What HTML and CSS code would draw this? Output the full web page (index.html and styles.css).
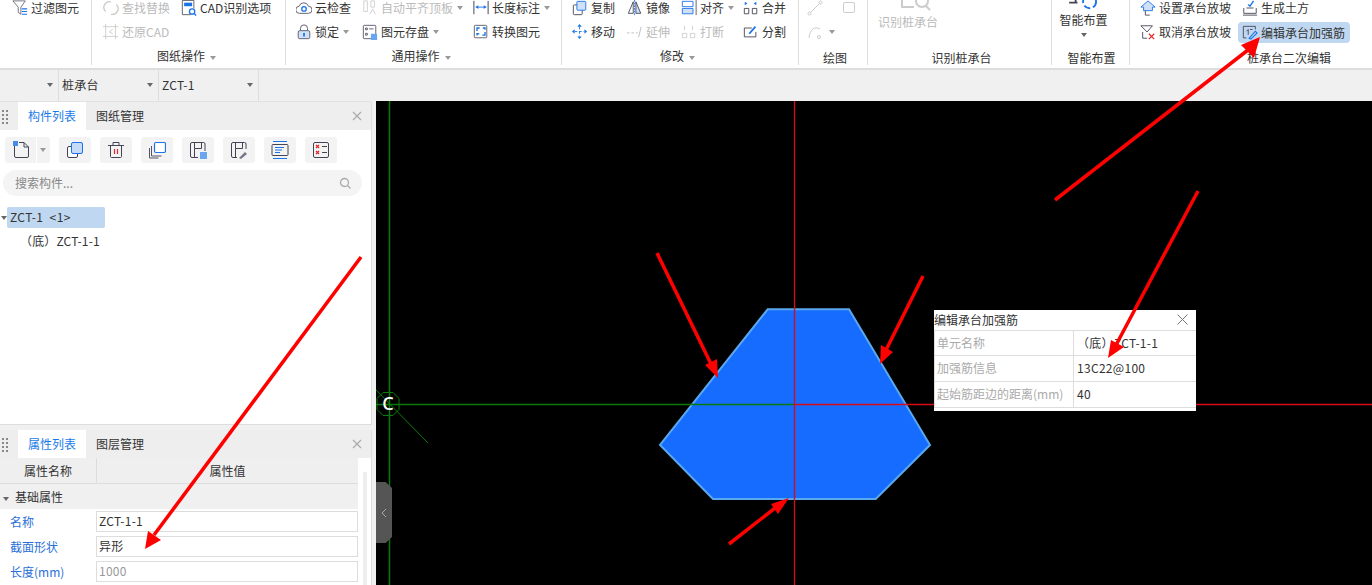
FILE: index.html
```html
<!DOCTYPE html>
<html lang="zh-CN">
<head>
    <meta charset="UTF-8">
    <title>桩承台二次编辑</title>
    <link rel="stylesheet" href="styles.css">
</head>
<body>

<div class="ribbon">
    <div class="group g-a">
        <div class="tools">
            <div class="tool"><svg class="ico" viewBox="0 0 18 18"><path d="M1 1h14l-5 7v8l-3-2V8z" fill="none" stroke="#667"/><path d="M11 10h6M11 13h6M11 16h6" stroke="#1a73e8" stroke-width="1.2"/></svg>过滤图元</div>
        </div>
    </div>
    <div class="group g-b">
        <div class="tools cols-b">
            <div class="tool off"><svg class="ico" viewBox="0 0 18 18"><path d="M3 13a6.500 6.500 0 0 1 6-11M15 5a6.500 6.500 0 0 1-6 11" fill="none" stroke="#ccc" stroke-width="1.500"/></svg>查找替换</div>
            <div class="tool"><svg class="ico" viewBox="0 0 18 18"><path d="M11 16.500H1.500V.5h13v9" fill="none" stroke="#556"/><path d="M3.500 3h9v4h-9z" fill="#1a73e8"/><circle cx="12.500" cy="13" r="3" fill="#fff" stroke="#1a73e8" stroke-width="1.500"/><path d="M15 15.500l2 2" stroke="#1a73e8" stroke-width="1.500"/></svg>CAD识别选项</div>
            <div class="tool off"><svg class="ico" viewBox="0 0 18 18"><path d="M3 0v17M0 3h17M14 0v17M0 14h17" fill="none" stroke="#ccc"/><path d="M11 6L7 9l4 2" fill="none" stroke="#ccc"/></svg>还原CAD</div>
        </div>
        <div class="group-name">图纸操作<i class="caret"></i></div>
    </div>
    <div class="group g-c">
        <div class="tools cols-c">
            <div class="tool"><svg class="ico" viewBox="0 0 18 18"><path d="M4 15a4 4 0 0 1-.5-8 5.500 5.500 0 0 1 10.500 0 4 4 0 0 1 0 8z" fill="none" stroke="#556"/><circle cx="9" cy="10" r="2.500" fill="none" stroke="#1a73e8" stroke-width="1.500"/></svg>云检查</div>
            <div class="tool off"><svg class="ico" viewBox="0 0 18 18"><path d="M2 1h4v12H2zM10 1h4v7h-4z" fill="none" stroke="#ccc"/><path d="M9 16l3-6 3 6" fill="none" stroke="#ccc"/></svg>自动平齐顶板<i class="caret"></i></div>
            <div class="tool"><svg class="ico" viewBox="0 0 18 18"><path d="M1 1v15M17 1v15" stroke="#334"/><path d="M3 8h12" stroke="#1a73e8"/><path d="M3 8l3-2v4zM15 8l-3-2v4z" fill="#1a73e8"/></svg>长度标注<i class="caret"></i></div>
            <div class="tool"><svg class="ico" viewBox="0 0 18 18"><rect x="2.500" y="7.500" width="13" height="9" rx="1.500" fill="#cfe0f7" stroke="#556"/><path d="M5 7V5a4 4 0 0 1 8 0v2" fill="none" stroke="#556"/><path d="M9 10v4" stroke="#1a73e8" stroke-width="2"/></svg>锁定<i class="caret"></i></div>
            <div class="tool"><svg class="ico" viewBox="0 0 18 18"><rect x="1.500" y="1.500" width="14" height="15" rx="1" fill="none" stroke="#556"/><path d="M4 4.500h2v2H4zM8 5.500h5M4 10.500h2v2H4z" stroke="#556" fill="none"/><path d="M10 11h7v7h-7z" fill="#6aa5f0"/></svg>图元存盘<i class="caret"></i></div>
            <div class="tool"><svg class="ico" viewBox="0 0 18 18"><rect x="1.500" y="1.500" width="14" height="14" rx="1" fill="none" stroke="#556"/><path d="M4.500 8V4.500h3M13.500 9v3.500h-3M7 11H4.500v2M11 4.500h2.500v2" fill="none" stroke="#1a73e8" stroke-width="1.500"/></svg>转换图元</div>
        </div>
        <div class="group-name">通用操作<i class="caret"></i></div>
    </div>
    <div class="group g-d">
        <div class="tools cols-d">
            <div class="tool"><svg class="ico" viewBox="0 0 18 18"><rect x="1.500" y="5.500" width="10" height="11" rx="1" fill="#fff" stroke="#445"/><rect x="5.500" y="1.500" width="10" height="10" rx="1" fill="#cfe0f7" stroke="#1a73e8"/></svg>复制</div>
            <div class="tool"><svg class="ico" viewBox="0 0 18 18"><path d="M7 2v13H1.500z" fill="none" stroke="#445"/><path d="M10 2v13h5.500z" fill="#cfe0f7" stroke="#445"/><path d="M8.500 0v17" stroke="#1a73e8" stroke-dasharray="2 1"/></svg>镜像</div>
            <div class="tool"><svg class="ico" viewBox="0 0 18 18"><path d="M1.500 1.500h12v6h-12z" fill="none" stroke="#1a73e8"/><path d="M1.500 9.500h12v6h-12z" fill="#cfe0f7" stroke="#1a73e8"/><path d="M17 0v17" stroke="#556"/></svg>对齐<i class="caret"></i></div>
            <div class="tool"><svg class="ico" viewBox="0 0 18 18"><path d="M1.500 9.500h5v6h-5zM10.500 9.500h5v6h-5z" fill="none" stroke="#445"/><path d="M2 2l3 2-3 2zM15 2l-3 2 3 2z" fill="#1a73e8"/></svg>合并</div>
            <div class="tool"><svg class="ico" viewBox="0 0 18 18"><path d="M8.500 3v11M3 8.500h11" stroke="#1a73e8" stroke-dasharray="3 2"/><path d="M8.500 0l2.500 3H6zM8.500 17L11 14H6zM0 8.500L3 6v5zM17 8.500L14 6v5z" fill="#1a73e8"/></svg>移动</div>
            <div class="tool off"><svg class="ico" viewBox="0 0 18 18"><path d="M0 10h3M5 10h3M10 10h2M13 15l3-12" stroke="#bbb"/></svg>延伸</div>
            <div class="tool off"><svg class="ico" viewBox="0 0 18 18"><path d="M1.500 10.500h5v5h-5zM10.500 10.500h5v5h-5zM4 2v5M13 2v5" fill="none" stroke="#ccc"/></svg>打断</div>
            <div class="tool"><svg class="ico" viewBox="0 0 18 18"><path d="M10 4.500H1.500v10h13V9" fill="none" stroke="#445"/><path d="M7 11l7-8" stroke="#1a73e8" stroke-width="2"/></svg>分割</div>
        </div>
        <div class="group-name">修改<i class="caret"></i></div>
    </div>
    <div class="group g-e">
        <div class="draw-icons">
            <svg viewBox="0 0 16 16" width="16" height="16"><path d="M2 14L14 2" stroke="#ccc"/><circle cx="2.500" cy="13.500" r="1.500" fill="#fff" stroke="#ccc"/><circle cx="13.500" cy="2.500" r="1.500" fill="#fff" stroke="#ccc"/></svg>
            <svg viewBox="0 0 16 16" width="16" height="16"><rect x="2.500" y="2.500" width="11" height="10" rx="1.500" fill="none" stroke="#ccc"/></svg>
            <svg viewBox="0 0 16 16" width="16" height="16"><path d="M2 14C3 5 8 2 13 5" fill="none" stroke="#ccc"/><circle cx="12" cy="13" r="1.500" fill="none" stroke="#ccc"/></svg>
            <i class="caret"></i>
        </div>
        <div class="group-name">绘图</div>
    </div>
    <div class="group g-f">
        <div class="big-tool off">
            <svg class="big-ico" viewBox="0 0 32 28"><path d="M2 10v12h12" fill="none" stroke="#ccc" stroke-width="2"/><circle cx="22" cy="16" r="6" fill="none" stroke="#ccc" stroke-width="2"/><path d="M26 21l4 4" stroke="#ccc" stroke-width="2"/></svg>
            <span>识别桩承台</span>
        </div>
        <div class="group-name">识别桩承台</div>
    </div>
    <div class="group g-g">
        <div class="big-tool">
            <svg class="big-ico" viewBox="0 0 32 28"><path d="M0 19h9M7 14v6" stroke="#445" stroke-width="2"/><circle cx="22" cy="18" r="7" fill="none" stroke="#1a73e8" stroke-width="2" stroke-dasharray="7 3"/></svg>
            <span>智能布置</span>
            <i class="caret dark"></i>
        </div>
        <div class="group-name">智能布置</div>
    </div>
    <div class="group g-h">
        <div class="tools cols-h">
            <div class="tool"><svg class="ico" viewBox="0 0 18 18"><path d="M9 1L1 8h3v4h10V8h3z" fill="#cfe0f7" stroke="#1a73e8"/><path d="M6 12v5h5" fill="none" stroke="#445"/></svg>设置承台放坡</div>
            <div class="tool"><svg class="ico" viewBox="0 0 18 18"><path d="M2 9v6h14V9M1 17h16M5 9h8" fill="none" stroke="#445"/><path d="M7 5l2 2 4-6" fill="none" stroke="#1a73e8" stroke-width="1.500"/></svg>生成土方</div>
            <div class="tool"><svg class="ico" viewBox="0 0 18 18"><path d="M1 2h13L8 9z" fill="none" stroke="#445"/><path d="M3 9v7h5" fill="none" stroke="#445"/><path d="M10 11l6 6M16 11l-6 6" stroke="#e0272b" stroke-width="1.300"/></svg>取消承台放坡</div>
            <div class="tool active"><svg class="ico" viewBox="0 0 18 18"><path d="M15 5V1.500H1.500v13H5" fill="none" stroke="#445"/><path d="M5 7l2-2v6M9 5h3" fill="none" stroke="#445"/><path d="M8 15l7-8 2 2-7 7z" fill="none" stroke="#1a73e8" stroke-width="1.200"/></svg>编辑承台加强筋</div>
        </div>
        <div class="group-name">桩承台二次编辑</div>
    </div>
</div>

<div class="selectors">
    <div class="select s-first"><i class="caret dark"></i></div>
    <div class="select">桩承台<i class="caret dark"></i></div>
    <div class="select">ZCT-1<i class="caret dark"></i></div>
</div>

<div class="workspace">
    <div class="side">
        <div class="panel list-panel">
            <div class="tabs">
                <span class="grip"></span>
                <span class="tab on">构件列表</span>
                <span class="tab">图纸管理</span>
                <svg class="tab-close" viewBox="0 0 10 10" width="10" height="10"><path d="M1 1l8 8M9 1l-8 8" stroke="#aaa" stroke-width="1.200"/></svg>
            </div>
            <div class="icon-row">
                <span class="icon-btn btn-new">
                    <svg viewBox="0 0 18 18" width="18" height="18"><path d="M1.500 5v10a1.500 1.500 0 0 0 1.500 1.500h11a1.500 1.500 0 0 0 1.500-1.500V6L11 1.500H6" fill="none" stroke="#445"/><path d="M11 1.500V6h4.500" fill="none" stroke="#445"/><path d="M0 0h5v5H0z" fill="#4a8ae8"/></svg>
                    <span class="btn-split"><i class="caret"></i></span>
                </span>
                <span class="icon-btn"><svg viewBox="0 0 18 18" width="18" height="18"><rect x="1.500" y="5.500" width="10" height="11" rx="1.500" fill="#fff" stroke="#445"/><rect x="5.500" y="1.500" width="11" height="11" rx="1.500" fill="#c5daf6" stroke="#1a73e8"/></svg></span>
                <span class="icon-btn"><svg viewBox="0 0 18 18" width="18" height="18"><path d="M3.500 4.500v11a1 1 0 0 0 1 1h9a1 1 0 0 0 1-1v-11M1 4.500h16M6 4V1.500h6V4" fill="none" stroke="#445"/><path d="M7.500 8v5M10.500 8v5" stroke="#e0272b" stroke-width="1.200"/></svg></span>
                <span class="icon-btn"><svg viewBox="0 0 18 18" width="18" height="18"><path d="M1.500 7v10h9M3.500 5v10h10" fill="none" stroke="#556"/><rect x="6.500" y="1.500" width="11" height="10" rx="1.500" fill="#fff" stroke="#1a73e8" stroke-width="1.200"/></svg></span>
                <span class="icon-btn"><svg viewBox="0 0 18 18" width="18" height="18"><path d="M16 10V3a1.500 1.500 0 0 0-1.500-1.500H3A1.500 1.500 0 0 0 1.500 3v12A1.500 1.500 0 0 0 3 16.500h6M5.500 16V7.500h7V2M5.500 2v5.500" fill="none" stroke="#445"/><path d="M11 11h7v7h-7z" fill="#6aa5f0"/></svg></span>
                <span class="icon-btn"><svg viewBox="0 0 18 18" width="18" height="18"><path d="M16 8V3a1.500 1.500 0 0 0-1.500-1.500H3A1.500 1.500 0 0 0 1.500 3v12A1.500 1.500 0 0 0 3 16.500h4M5.500 16V7.500h7V2M5.500 2v5.500" fill="none" stroke="#445"/><path d="M9 17l6-6 2 2-6 5z" fill="#778"/></svg></span>
                <span class="icon-btn"><svg viewBox="0 0 18 18" width="18" height="18"><path d="M2 .5h14M2 17.500h14" stroke="#1a73e8" stroke-width="1.200"/><rect x="1" y="3.500" width="16" height="11" rx="1" fill="none" stroke="#445"/><path d="M4 6.500h9M4 9h7M4 11.500h5" stroke="#1a73e8"/></svg></span>
                <span class="icon-btn"><svg viewBox="0 0 18 18" width="18" height="18"><rect x="1.500" y="1.500" width="15" height="15" rx="1.500" fill="none" stroke="#445"/><path d="M4 4l3 3M7 4L4 7M4 10l3 3M7 10l-3 3" stroke="#e0272b" stroke-width="1.300"/><path d="M10 5.500h5M10 11.500h5" stroke="#445"/></svg></span>
            </div>
            <div class="search">
                <span>搜索构件...</span>
                <svg viewBox="0 0 12 12" width="12" height="12"><circle cx="5.500" cy="5.500" r="4" fill="none" stroke="#aaa" stroke-width="1.300"/><path d="M8.500 8.500l3 3" stroke="#aaa" stroke-width="1.300"/></svg>
            </div>
            <div class="tree">
                <div class="tree-row"><i class="caret dark"></i><span class="tree-sel">ZCT-1&nbsp;&nbsp;&lt;1&gt;</span></div>
                <div class="tree-child">（底）ZCT-1-1</div>
            </div>
        </div>
        <div class="panel attr-panel">
            <div class="tabs">
                <span class="grip"></span>
                <span class="tab on">属性列表</span>
                <span class="tab">图层管理</span>
                <svg class="tab-close" viewBox="0 0 10 10" width="10" height="10"><path d="M1 1l8 8M9 1l-8 8" stroke="#aaa" stroke-width="1.200"/></svg>
            </div>
            <div class="attr-body">
                <div class="attr-table">
                    <div class="attr-head"><span>属性名称</span><span>属性值</span></div>
                    <div class="attr-section"><i class="caret dark"></i>基础属性</div>
                    <div class="attr-row"><label>名称</label><div class="field">ZCT-1-1</div></div>
                    <div class="attr-row"><label>截面形状</label><div class="field">异形</div></div>
                    <div class="attr-row"><label>长度(mm)</label><div class="field muted">1000</div></div>
                </div>
                <div class="attr-scroll"></div>
            </div>
        </div>
    </div>
    <div class="gutter"></div>
    <div class="canvas">
        <svg class="drawing" viewBox="0 0 996 484" width="996" height="484">
            <path d="M391.700 208.300H473L554 344L499.700 398H337L284 344Z" fill="#166cff" stroke="#5aa9ee" stroke-width="2"/>
            <path d="M13.500 0V484" stroke="#0a7a0a" stroke-width="1.500"/>
            <path d="M0 303.500H418" stroke="#0a7a0a" stroke-width="1.500"/>
            <path d="M0 289L52 342" stroke="#0a7a0a"/>
            <path d="M418 303.500H996" stroke="#d80c18" stroke-width="1.300"/>
            <path d="M418.500 0V484" stroke="#d80c18" stroke-width="1.300"/>
            <path d="M7 291.500h10l6 6v11l-6 6H7l-6-6v-11z" fill="none" stroke="#0a7a0a"/>
            <text x="12" y="309" text-anchor="middle" class="axis-name">C</text>
        </svg>
        <div class="collapse-handle"><svg viewBox="0 0 8 10" width="8" height="10"><path d="M6 1L2 5l4 4" fill="none" stroke="#aaa"/></svg></div>
        <div class="rebar-dialog">
            <div class="dialog-title">编辑承台加强筋<svg class="dialog-close" viewBox="0 0 11 11" width="11" height="11"><path d="M.5.5l10 10M10.500.5l-10 10" stroke="#777"/></svg></div>
            <div class="dialog-grid">
                <div class="d-label">单元名称</div><div class="d-value">（底）ZCT-1-1</div>
                <div class="d-label">加强筋信息</div><div class="d-value">13C22@100</div>
                <div class="d-label">起始筋距边的距离(mm)</div><div class="d-value">40</div>
            </div>
        </div>
    </div>
</div>

<!-- annotation arrows drawn over the screenshot -->
<svg class="arrows" viewBox="0 0 1372 585" width="1372" height="585">
    <g stroke="#f00" stroke-width="3.500" fill="#f00">
        <path d="M1055 200L1248 50"/><path d="M1260 37L1241 45L1254 58Z" stroke="none"/>
        <path d="M1198 191L1116 345"/><path d="M1108 358L1111 340L1124 347Z" stroke="none"/>
        <path d="M361 257L154 535"/><path d="M145 549L148 531L161 540Z" stroke="none"/>
        <path d="M657 253L711 364"/><path d="M718 378L705 365L717 359Z" stroke="none"/>
        <path d="M923 276L886 350"/><path d="M880 364L881 345L893 352Z" stroke="none"/>
        <path d="M729 544L775 508"/><path d="M789 498L771 504L778 514Z" stroke="none"/>
    </g>
</svg>

</body>
</html>
```
FILE: styles.css
```css
* {
    box-sizing: border-box;
}

html, body {
    margin: 0;
    height: 100%;
    overflow: hidden;
}

body {
    position: relative;
    width: 1372px;
    height: 585px;
    background-color: #f0f0f0;
    color: #333;
    font-family: "Noto Sans CJK SC", "Noto Sans", sans-serif;
    font-size: 12px;
    line-height: 14px;
}

.caret {
    display: inline-block;
    width: 0;
    height: 0;
    margin-left: 5px;
    border-left: 3.5px solid transparent;
    border-right: 3.5px solid transparent;
    border-top: 4px solid #999;
    vertical-align: middle;
}

.caret.dark {
    border-top-color: #666;
}

/* ribbon */

.ribbon {
    display: flex;
    height: 70px;
    background-color: #fff;
    border-bottom: 2px solid #ddd;
    overflow: hidden;
}

.group {
    display: flex;
    flex-direction: column;
    flex: none;
    height: 65px;
    border-right: 1px solid #ddd;
}

.g-a { width: 92px; padding-left: 12px; }
.g-b { width: 194px; padding-left: 11px; }
.g-c { width: 276px; padding-left: 10px; }
.g-d { width: 237px; padding-left: 10px; }
.g-e { width: 69px; }
.g-f { width: 184px; }
.g-g { width: 78px; }
.g-h { flex: 1; border-right: none; padding-left: 10px; }

.tools {
    display: grid;
    grid-auto-rows: 24px;
    margin-top: -4px;
    height: 52px;
    flex: none;
}

.cols-b { grid-template-columns: 78px 100px; }
.cols-c { grid-template-columns: 66px 111px 84px; }
.cols-d { grid-template-columns: 55px 54px 62px 56px; }
.cols-h { grid-template-columns: 102px 110px; }

.tool {
    display: flex;
    align-items: center;
    white-space: nowrap;
    height: 24px;
    color: #333;
}

.tool .caret {
    margin-left: 4px;
}

.ico {
    width: 16px;
    height: 16px;
    margin-right: 3px;
    flex: none;
}

.off {
    color: #bbb;
}

.tool.active {
    width: 112px;
    height: 21px;
    margin: 2px 0 0 -4px;
    padding-left: 4px;
    background-color: #bfd7f0;
    border-radius: 4px;
}

.group-name {
    height: 13px;
    line-height: 13px;
    margin-top: 3px;
    text-align: center;
    color: #333;
}

.g-b .group-name,
.g-c .group-name,
.g-d .group-name {
    margin-top: 1px;
    margin-right: 15px;
}

.g-e .group-name,
.g-f .group-name {
    margin-left: 4px;
}

.g-g .group-name {
    margin-left: 2px;
}

.g-h .group-name {
    margin-left: 66px;
}

.draw-icons {
    display: grid;
    grid-template-columns: 16px 10px 16px;
    grid-auto-rows: 24px;
    column-gap: 4px;
    align-items: center;
    margin: -4px 0 0 8px;
    height: 52px;
    flex: none;
}

.draw-icons svg:nth-child(2) {
    grid-column: 3;
}

.draw-icons svg:nth-child(3) {
    grid-column: 1;
}

.draw-icons .caret {
    grid-column: 2;
    margin-left: 2px;
}

.big-tool {
    display: flex;
    flex-direction: column;
    align-items: center;
    height: 52px;
    flex: none;
    margin-top: -15px;
    padding-right: 14px;
    color: #333;
}

.big-tool.off {
    align-items: flex-start;
    padding-left: 10px;
    color: #bbb;
}

.big-tool .caret {
    margin: 6px 0 0;
}

.big-ico {
    width: 32px;
    height: 28px;
    margin-bottom: 2px;
}

.big-tool.off .big-ico {
    margin-left: 22px;
}

.big-tool + .group-name {
    margin-top: 14px;
}

/* selector bar */

.selectors {
    display: flex;
    height: 31px;
    background-color: #f0f0f0;
}

.select {
    display: flex;
    align-items: center;
    justify-content: space-between;
    width: 100px;
    padding: 0 5px 2px 3px;
    border-right: 1px solid #ddd;
    letter-spacing: 0.25px;
}

.s-first {
    width: 59px;
    justify-content: flex-end;
}

/* workspace */

.workspace {
    display: flex;
    height: 484px;
}

.side {
    display: flex;
    flex-direction: column;
    flex: none;
    width: 372px;
    border-top: 1px solid #e2e2e2;
    background-color: #f0f0f0;
}

.gutter {
    flex: none;
    width: 4px;
    background-color: #f0f0f0;
}

.panel {
    background-color: #fff;
    border-right: 1px solid #ddd;
}

.list-panel {
    height: 323px;
    border-bottom: 1px solid #ddd;
}

.attr-panel {
    flex: 1;
    margin-top: 5px;
    overflow: hidden;
}

.tabs {
    display: flex;
    align-items: center;
    height: 28px;
    background-color: #eeeeef;
    padding-left: 18px;
    position: relative;
}

.grip {
    position: absolute;
    left: 1px;
    top: 7px;
    width: 8px;
    height: 16px;
    background-image: radial-gradient(circle, #888 1px, transparent 1.2px);
    background-size: 4px 4px;
}

.tab {
    padding: 0 10px;
    height: 28px;
    line-height: 28px;
    color: #333;
}

.tab.on {
    background-color: #fff;
    color: #1a7be8;
}

.tab-close {
    position: absolute;
    right: 9px;
    top: 9px;
}

.icon-row {
    display: flex;
    gap: 9px;
    padding: 7px 0 0 5px;
}

.icon-btn {
    display: flex;
    align-items: center;
    justify-content: center;
    width: 32px;
    height: 26px;
    background-color: #f3f3f4;
    border-radius: 3px;
}

.btn-new {
    width: 45px;
    justify-content: flex-start;
    padding-left: 8px;
}

.btn-split {
    display: flex;
    align-items: center;
    justify-content: center;
    height: 26px;
    margin-left: 5px;
    width: 13px;
    border-left: 1px solid #fff;
}

.btn-split .caret {
    margin-left: 0;
}

.search {
    display: flex;
    align-items: center;
    justify-content: space-between;
    height: 26px;
    margin: 7px 9px 0 3px;
    padding: 0 11px 0 12px;
    background-color: #f4f4f4;
    border-radius: 13px;
    color: #888;
}

.tree {
    padding-top: 11px;
}

.tree-row {
    display: flex;
    align-items: center;
}

.tree-row .caret {
    flex: none;
    margin: 0 0 0 1px;
}

.tree-sel {
    width: 98px;
    height: 21px;
    line-height: 20px;
    padding-left: 3px;
    background-color: #bfd7f0;
    border-radius: 2px;
    letter-spacing: 0.4px;
}

.tree-child {
    height: 24px;
    line-height: 26px;
    padding-left: 20px;
    letter-spacing: 0.15px;
}

.attr-body {
    display: flex;
}

.attr-table {
    width: 358px;
    flex: none;
}

.attr-head {
    display: grid;
    grid-template-columns: 96px 1fr;
    height: 26px;
    line-height: 25px;
    text-align: center;
    background-color: #efefef;
    border-bottom: 1px solid #ddd;
}

.attr-head span + span {
    border-left: 1px solid #ddd;
}

.attr-section {
    height: 25px;
    line-height: 25px;
    background-color: #f0f0f0;
    padding-left: 3px;
}

.attr-section .caret {
    margin: 0 6px 0 0;
}

.attr-row {
    display: grid;
    grid-template-columns: 96px 1fr;
    align-items: center;
    height: 25px;
}

.attr-row label {
    padding-left: 10px;
    color: #2a6fd8;
}

.field {
    height: 21px;
    line-height: 18px;
    padding-left: 2px;
    border: 1px solid #ddd;
    background-color: #fff;
    letter-spacing: 0.25px;
}

.field.muted {
    color: #999;
}

.attr-scroll {
    width: 4px;
    height: 120px;
    margin: 14px 0 0 5px;
    background-color: #eee;
}

/* canvas */

.canvas {
    position: relative;
    flex: 1;
    background-color: #000;
    overflow: hidden;
}

.drawing {
    display: block;
}

.axis-name {
    fill: #fff;
    font-family: "Noto Sans", sans-serif;
    font-size: 18px;
    font-weight: 500;
}

.collapse-handle {
    position: absolute;
    left: 0;
    top: 381px;
    display: flex;
    align-items: center;
    justify-content: center;
    width: 16px;
    height: 61px;
    background-color: #555;
    clip-path: polygon(0 0, 60% 0, 100% 10%, 100% 90%, 60% 100%, 0 100%);
}

.rebar-dialog {
    position: absolute;
    left: 558px;
    top: 209px;
    width: 262px;
    height: 101px;
    background-color: #fff;
}

.dialog-title {
    position: relative;
    height: 21px;
    line-height: 19px;
    border-bottom: 1px solid #ddd;
}

.dialog-close {
    position: absolute;
    right: 8px;
    top: 4px;
}

.dialog-grid {
    display: grid;
    grid-template-columns: 139px 1fr;
    grid-template-rows: 25px 26px 26px;
    border-left: 1px solid #ddd;
}

.d-label {
    padding-left: 2px;
    line-height: 24px;
    color: #aaa;
    border-right: 1px solid #ddd;
    border-bottom: 1px solid #ddd;
}

.d-value {
    padding-left: 3px;
    line-height: 24px;
    border-bottom: 1px solid #ddd;
    letter-spacing: 0.3px;
}

.arrows {
    position: absolute;
    left: 0;
    top: 0;
    pointer-events: none;
}
```
